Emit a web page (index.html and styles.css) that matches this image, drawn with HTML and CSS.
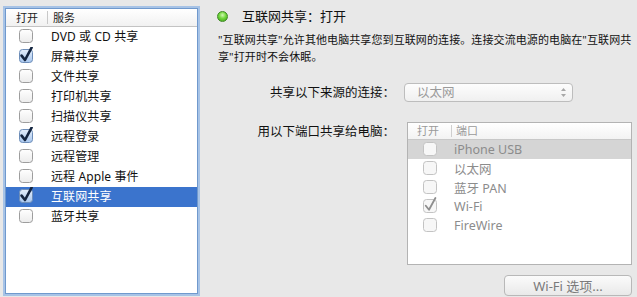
FILE: index.html
```html
<!DOCTYPE html>
<html lang="zh-CN">
<head>
<meta charset="utf-8">
<title>共享</title>
<link rel="stylesheet" href="styles.css">
</head>
<body>
<svg class="defs" width="0" height="0" aria-hidden="true">
  <defs>
    <linearGradient id="g-off" x1="0" y1="0" x2="0" y2="1">
      <stop offset="0" stop-color="#ffffff"/>
      <stop offset="1" stop-color="#ececec"/>
    </linearGradient>
    <linearGradient id="g-on" x1="0" y1="0" x2="0" y2="1">
      <stop offset="0" stop-color="#e3eefc"/>
      <stop offset="1" stop-color="#a9c7ee"/>
    </linearGradient>
    <symbol id="cb-off" viewBox="0 0 14 16">
      <rect x="0.5" y="2.5" width="13" height="13" rx="3" fill="url(#g-off)" stroke="#9d9d9d"/>
    </symbol>
    <symbol id="cb-on" viewBox="0 0 14 16">
      <rect x="0.5" y="2.5" width="13" height="13" rx="3" fill="url(#g-on)" stroke="#6d8db8"/>
      <path d="M2.6 8.6 L6 13 L12.6 0.6" fill="none" stroke="#142540" stroke-width="2.6" stroke-linecap="round" stroke-linejoin="round"/>
    </symbol>
    <symbol id="cb-dis" viewBox="0 0 14 16">
      <rect x="0.5" y="2.5" width="13" height="13" rx="3" fill="#f7f7f7" stroke="#c3c3c3"/>
    </symbol>
    <symbol id="cb-dis-on" viewBox="0 0 14 16">
      <rect x="0.5" y="2.5" width="13" height="13" rx="3" fill="#f7f7f7" stroke="#c3c3c3"/>
      <path d="M2.8 8.8 L6 12.8 L12.4 1" fill="none" stroke="#8e8e8e" stroke-width="1.8" stroke-linecap="round" stroke-linejoin="round"/>
    </symbol>
  </defs>
</svg>

<div class="window">
  <section class="services">
    <div class="list-head">
      <span class="head-on">打开</span>
      <span class="head-name">服务</span>
    </div>
    <ul class="rows">
      <li class="row"><svg class="cb"><use href="#cb-off"/></svg><span>DVD 或 CD 共享</span></li>
      <li class="row"><svg class="cb"><use href="#cb-on"/></svg><span>屏幕共享</span></li>
      <li class="row"><svg class="cb"><use href="#cb-off"/></svg><span>文件共享</span></li>
      <li class="row"><svg class="cb"><use href="#cb-off"/></svg><span>打印机共享</span></li>
      <li class="row"><svg class="cb"><use href="#cb-off"/></svg><span>扫描仪共享</span></li>
      <li class="row"><svg class="cb"><use href="#cb-on"/></svg><span>远程登录</span></li>
      <li class="row"><svg class="cb"><use href="#cb-off"/></svg><span>远程管理</span></li>
      <li class="row"><svg class="cb"><use href="#cb-off"/></svg><span>远程 Apple 事件</span></li>
      <li class="row row-selected"><svg class="cb"><use href="#cb-on"/></svg><span>互联网共享</span></li>
      <li class="row"><svg class="cb"><use href="#cb-off"/></svg><span>蓝牙共享</span></li>
    </ul>
  </section>

  <section class="detail">
    <div class="status">
      <span class="dot"></span>
      <span class="status-text">互联网共享：打开</span>
    </div>
    <p class="desc">"互联网共享"允许其他电脑共享您到互联网的连接。连接交流电源的电脑在"互联网共享"打开时不会休眠。</p>

    <div class="form">
      <div class="label label-popup">共享以下来源的连接：</div>
      <div class="popup">
        <span class="popup-value">以太网</span>
        <svg class="popup-arrows" width="7" height="11" viewBox="0 0 7 11"><path d="M3.5 1 L6 4 L1 4 Z M3.5 10 L6 7 L1 7 Z" fill="#a8a8a8"/></svg>
      </div>

      <div class="label label-ports">用以下端口共享给电脑：</div>
      <div class="ports">
        <div class="ports-head">
          <span class="head-on">打开</span>
          <span class="head-name">端口</span>
        </div>
        <ul class="port-rows">
          <li class="port port-first"><svg class="cb"><use href="#cb-dis"/></svg><span>iPhone USB</span></li>
          <li class="port"><svg class="cb"><use href="#cb-dis"/></svg><span>以太网</span></li>
          <li class="port"><svg class="cb"><use href="#cb-dis"/></svg><span>蓝牙 PAN</span></li>
          <li class="port"><svg class="cb"><use href="#cb-dis-on"/></svg><span>Wi-Fi</span></li>
          <li class="port"><svg class="cb"><use href="#cb-dis"/></svg><span>FireWire</span></li>
        </ul>
      </div>

      <button class="btn" type="button">Wi-Fi 选项...</button>
    </div>
  </section>
</div>
</body>
</html>
```

FILE: styles.css
```css
* { box-sizing: border-box; }

html, body {
  margin: 0;
  padding: 0;
}

body {
  width: 637px;
  height: 297px;
  overflow: hidden;
  background: #e8e8e8;
  font-family: "Noto Sans", "Noto Sans CJK SC", sans-serif;
  color: #111;
}

.defs {
  position: absolute;
  width: 0;
  height: 0;
}

.window {
  display: flex;
  padding: 8px 5px 0 5px;
}

/* ---------- left services list ---------- */
.services {
  flex: none;
  width: 193px;
  height: 286px;
  background: #fff;
  border: 1px solid #7099cd;
  box-shadow: 0 0 0 2px #a7c3e6;
  display: flex;
  flex-direction: column;
}

.list-head {
  height: 18px;
  display: flex;
  align-items: center;
  font-size: 11px;
  line-height: 17px;
  color: #222;
  background: linear-gradient(#ffffff, #f1f1f1);
  border-bottom: 1px solid #c3c3c3;
}

.list-head .head-on {
  width: 42px;
  padding-left: 10px;
  border-right: 1px solid #c8c8c8;
  height: 13px;
  line-height: 13px;
}

.list-head .head-name {
  padding-left: 5px;
  line-height: 13px;
}

.rows {
  list-style: none;
  margin: 0;
  padding: 0;
}

.row {
  height: 20px;
  display: flex;
  align-items: center;
  font-size: 12px;
  line-height: 20px;
  color: #111;
  letter-spacing: 0.1px;
}

.row .cb {
  width: 14px;
  height: 16px;
  margin: -4px 0 0 13px;
  overflow: visible;
  flex: none;
}

.row span {
  margin-left: 18px;
}

.row-selected {
  background: #3b74cd;
  color: #fff;
}

/* ---------- right detail ---------- */
.detail {
  flex: none;
  width: 422px;
  margin-left: 12px;
  padding-left: 7px;
  display: flex;
  flex-direction: column;
}

.status {
  display: flex;
  align-items: center;
  height: 16px;
}

.dot {
  width: 11px;
  height: 11px;
  border-radius: 50%;
  background: radial-gradient(circle at 50% 35%, #d2f7b4 0%, #72d83d 45%, #3c9e1a 100%);
  border: 1px solid #3f8a24;
  flex: none;
}

.status-text {
  margin-left: 14px;
  font-size: 13px;
  line-height: 16px;
  color: #111;
}

.desc {
  margin: 7px 0 0 1px;
  width: 414px;
  font-size: 11px;
  line-height: 17px;
  letter-spacing: 0.1px;
  color: #111;
}

.form {
  margin-top: 18px;
  display: grid;
  grid-template-columns: 178px 1fr;
  column-gap: 9px;
  row-gap: 20px;
}

.label {
  text-align: right;
  font-size: 12.5px;
  color: #111;
}

.label-popup {
  line-height: 19px;
}

.label-ports {
  line-height: 20px;
}

.popup {
  width: 169px;
  height: 19px;
  border: 1px solid #bdbdbd;
  border-radius: 4px;
  background: linear-gradient(#fdfdfd, #f0f0f0);
  display: flex;
  align-items: center;
  justify-content: space-between;
  padding: 0 5px 0 12px;
}

.popup-value {
  font-size: 12.5px;
  color: #9a9a9a;
  line-height: 17px;
}

.ports {
  margin-left: 3px;
  height: 143px;
  background: #fff;
  border: 1px solid #b3b3b3;
}

.ports-head {
  height: 17px;
  display: flex;
  align-items: center;
  font-size: 11px;
  color: #9a9a9a;
  background: linear-gradient(#ffffff, #f3f3f3);
  border-bottom: 1px solid #c8c8c8;
}

.ports-head .head-on {
  width: 44px;
  padding-left: 9px;
  border-right: 1px solid #cfcfcf;
  height: 12px;
  line-height: 12px;
}

.ports-head .head-name {
  padding-left: 4px;
  line-height: 12px;
}

.port-rows {
  list-style: none;
  margin: 0;
  padding: 0;
}

.port {
  height: 19px;
  display: flex;
  align-items: center;
  font-size: 12.5px;
  color: #8c8c8c;
}

.port-first {
  background: #d5d5d5;
}

.port .cb {
  width: 14px;
  height: 16px;
  margin: -4px 0 0 15px;
  overflow: visible;
  flex: none;
}

.port span {
  margin-left: 17px;
}

.btn {
  grid-column: 2;
  justify-self: end;
  margin-top: -10px;
  width: 128px;
  height: 21px;
  border: 1px solid #b8b8b8;
  border-radius: 4px;
  background: linear-gradient(#fbfbfb, #e9e9e9);
  font-family: "Noto Sans", "Noto Sans CJK SC", sans-serif;
  font-size: 13px;
  line-height: 18px;
  color: #7a7a7a;
  padding: 0;
}
```
